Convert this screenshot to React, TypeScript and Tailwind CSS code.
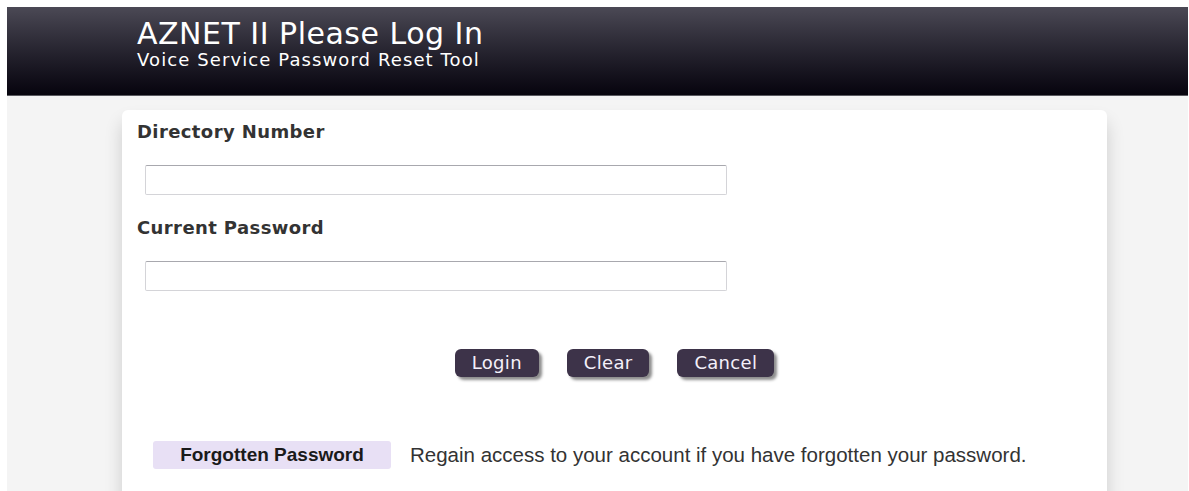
import React from 'react';

const tahoma = { fontFamily: '"DejaVu Sans", Verdana, sans-serif' };
const arial = { fontFamily: '"Liberation Sans", Arial, sans-serif' };

function ActionButton({ label }: { label: string }) {
    return (
        <button
            type="button"
            className="h-[28px] px-[17px] rounded-[6px] bg-[#3d3349] text-[#f4f0fa] text-[18px] leading-none tracking-[0.3px] shadow-[3px_3px_3px_rgba(0,0,0,0.45)]"
        >
            {label}
        </button>
    );
}

export default function App() {
    return (
        <div className="min-h-[491px] bg-white pl-[7px] pt-[7px] pr-[1px]" style={tahoma}>
            {/* top banner */}
            <div className="h-[89px] bg-gradient-to-b from-[#4b4955] to-[#07050e] border-b border-[#5a5a60] pl-[130px] pt-[12px]">
                <h1 className="text-[30px] leading-[30px] tracking-[0.5px] text-white">AZNET II Please Log In</h1>
                <p className="mt-[1px] text-[18px] leading-[20px] tracking-[1.1px] text-white">Voice Service Password Reset Tool</p>
            </div>

            <div className="bg-[#f4f4f4] pl-[115px] pr-[81px] pt-[14px] h-[395px] overflow-hidden">
                <div className="bg-white rounded-[6px] shadow-[0_12px_18px_rgba(0,0,0,0.16)] pl-[15px] pt-[10px] h-[400px]">
                    <label className="block text-[18px] leading-[24px] tracking-[0.4px] font-bold text-[#333]">Directory Number</label>
                    <input
                        type="text"
                        className="block mt-[21px] ml-[8px] w-[582px] h-[30px] rounded-[2px] border border-[#d4d4d8] border-t-[#a8a8ae] bg-white outline-none"
                    />
                    <label className="block mt-[21px] text-[18px] leading-[24px] tracking-[0.4px] font-bold text-[#333]">Current Password</label>
                    <input
                        type="password"
                        className="block mt-[21px] ml-[8px] w-[582px] h-[30px] rounded-[2px] border border-[#d4d4d8] border-t-[#a8a8ae] bg-white outline-none"
                    />

                    <div className="mt-[58px] flex justify-center gap-[28px] pr-[15px]">
                        <ActionButton label="Login" />
                        <ActionButton label="Clear" />
                        <ActionButton label="Cancel" />
                    </div>

                    <div className="mt-[63px] ml-[16px] flex items-center" style={arial}>
                        <span className="w-[238px] h-[28px] rounded-[3px] bg-[#e8e0f5] flex items-center justify-center text-[19px] font-bold text-[#1a1a1a]">
                            Forgotten Password
                        </span>
                        <span className="ml-[19px] text-[20.5px] text-[#333]">
                            Regain access to your account if you have forgotten your password.
                        </span>
                    </div>
                </div>
            </div>
        </div>
    );
}
